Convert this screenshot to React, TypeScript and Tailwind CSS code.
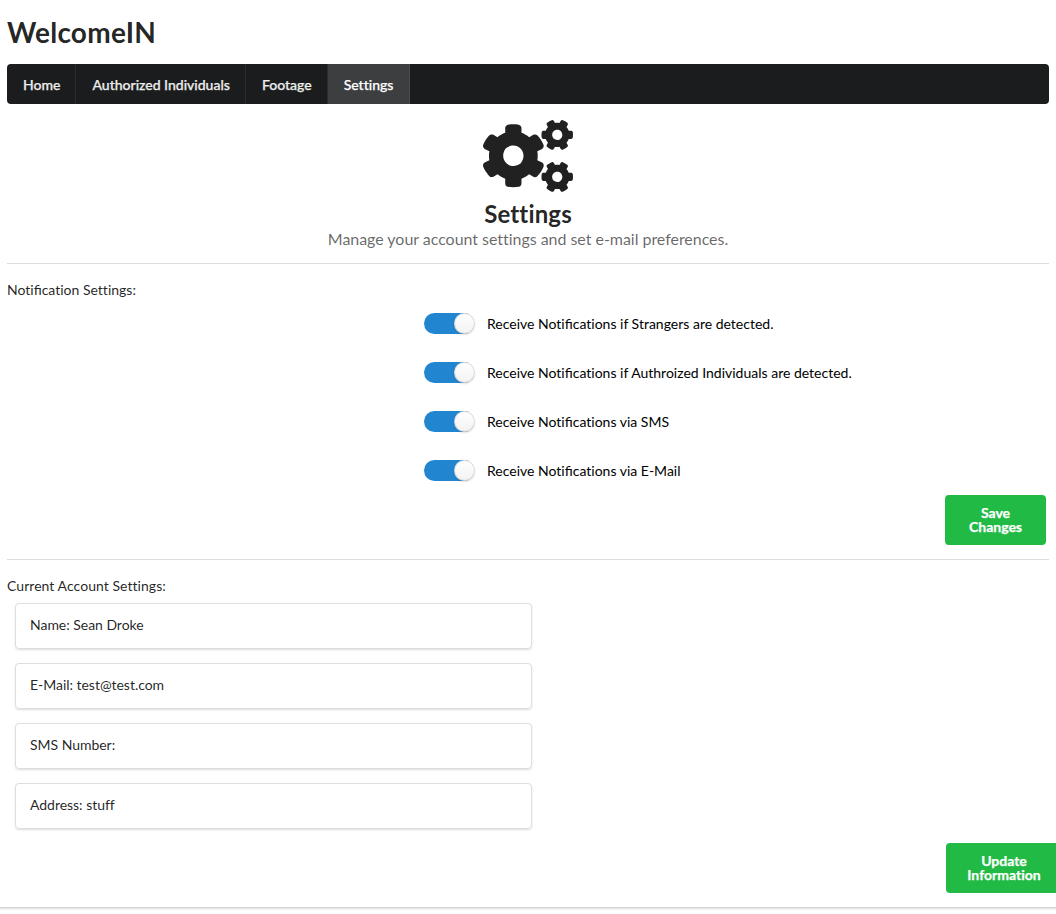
import { FaCogs } from 'react-icons/fa';

const navItems = ['Home', 'Authorized Individuals', 'Footage', 'Settings'];

const notifications = [
  'Receive Notifications if Strangers are detected.',
  'Receive Notifications if Authroized Individuals are detected.',
  'Receive Notifications via SMS',
  'Receive Notifications via E-Mail',
];

const account = ['Name: Sean Droke', 'E-Mail: test@test.com', 'SMS Number:', 'Address: stuff'];

/* Keeps the "fi" ligature while the page has the wider "ti" and "tt" ones off. */
function Ligated({ text }: { text: string }) {
  return (
    <>
      {text.split(/(fi)/).map((part, i) =>
        part === 'fi' ? (
          <span key={i} className="[font-variant-ligatures:common-ligatures]">
            fi
          </span>
        ) : (
          part
        ),
      )}
    </>
  );
}

function Toggle({ label }: { label: string }) {
  return (
    <label className="flex h-[21px] items-center text-black">
      <span className="flex h-[21px] w-[51px] shrink-0 justify-end rounded-full bg-[linear-gradient(to_right,#2185d0_45px,transparent_45px)]">
        <span className="h-[21px] w-[21px] rounded-full bg-white bg-linear-to-b from-transparent to-black/5 shadow-[0_1px_2px_0_rgba(34,36,38,0.15),0_0_0_1px_rgba(34,36,38,0.15)_inset]" />
      </span>
      <span className="ml-3 leading-[21px]">
        <Ligated text={label} />
      </span>
    </label>
  );
}

export default function App() {
  return (
    <div className="h-[914px] w-full overflow-hidden bg-white font-['Lato',sans-serif] text-[14px] leading-[20px] text-black/87 [font-variant-ligatures:no-common-ligatures]">
      <div className="flex h-[908px] flex-col border-b border-[#d4d4d5] px-[7px] shadow-[0_1px_2px_0_rgba(34,36,38,0.15)]">
        <h1 className="mt-[14px] h-[50px] text-[28px] font-bold leading-[36px] tracking-[0.25px]">WelcomeIN</h1>
        <nav className="flex h-10 shrink-0 overflow-hidden rounded-[4px] bg-[#1b1c1d]">
          {navItems.map((item) => (
            <a
              key={item}
              className={
                item === 'Settings'
                  ? 'flex w-[82px] items-center border-r border-white/8 bg-[#3d3e3f] pl-4 font-medium text-white [-webkit-text-stroke:0.25px]'
                  : 'flex items-center border-r border-white/8 pl-4 pr-[15px] font-medium text-white/90 [-webkit-text-stroke:0.25px]'
              }
            >
              <span className="mt-px">{item}</span>
            </a>
          ))}
        </nav>
        <header className="mt-4 flex h-[144px] shrink-0 flex-col items-center border-b border-[#dedede]">
          <FaCogs className="h-[72px] w-[90px] text-[#212121]" />
          <h2 className="mt-2 text-[24px] font-bold leading-[28px] tracking-[0.15px]">Settings</h2>
          <p className="-mt-px text-[16px] leading-[23px] tracking-[-0.035px] text-black/60">
            Manage your account settings and set e-mail preferences.
          </p>
        </header>
        <section className="flex h-[296px] shrink-0 flex-col border-b border-[#dedede] pt-4">
          <h3>
            <Ligated text="Notification Settings:" />
          </h3>
          <div className="ml-[417px] mt-[13px] flex flex-col gap-7">
            {notifications.map((label) => (
              <Toggle key={label} label={label} />
            ))}
          </div>
          <button className="mr-[3px] mt-[14px] h-[50px] w-[101px] self-end rounded-[4px] bg-[#21ba45] px-[20px] font-bold leading-[14px] text-white [-webkit-text-stroke:0.25px]">
            Save Changes
          </button>
        </section>
        <section className="flex flex-col pt-4">
          <h3 className="tracking-[0.05px]">Current Account Settings:</h3>
          <div className="ml-2 mt-[7px] flex w-[517px] flex-col gap-[14px]">
            {account.map((line) => (
              <div
                key={line}
                className="h-[46px] rounded-[4px] border border-[#dedede] px-[14px] pt-[11px] tracking-[-0.03px] shadow-[0_1px_2px_0_rgba(34,36,38,0.15)]"
              >
                {line}
              </div>
            ))}
          </div>
          <button className="-mr-[13px] mt-[14px] h-[50px] w-[116px] self-end rounded-[4px] bg-[#21ba45] font-bold leading-[14px] text-white [-webkit-text-stroke:0.25px]">
            Update
            <br />
            Information
          </button>
        </section>
      </div>
    </div>
  );
}
